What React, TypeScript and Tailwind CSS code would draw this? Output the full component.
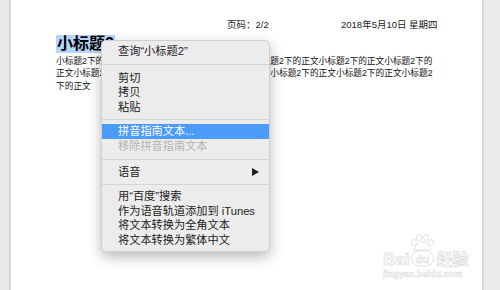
import React from "react";

const FONT = { fontFamily: '"Liberation Sans","Noto Sans CJK SC",sans-serif' };

const unit = "小标题2下的正文";
const line1 = unit.repeat(5) + "小标题2下的";
const line2 = "正文" + unit.repeat(5) + "小标题2";
const line3 = "下的正文";

function Item({ children, disabled, active, arrow }: { children: React.ReactNode; disabled?: boolean; active?: boolean; arrow?: boolean }) {
  return (
    <div
      className={
        "flex h-[14.5px] items-center justify-between pl-[16px] pr-[10px] text-[11.2px] leading-[14.5px] whitespace-nowrap " +
        (active ? "bg-[#4b9bf8] text-white" : disabled ? "text-[#b2b2b2]" : "text-[#222222]")
      }
    >
      <span>{children}</span>
      {arrow && (
        <svg width="7" height="8" viewBox="0 0 7 8">
          <path d="M0 0 L7 4 L0 8 Z" fill="#1e1e1e" />
        </svg>
      )}
    </div>
  );
}

function Sep({ h }: { h: string }) {
  return (
    <div className={"flex items-center " + h}>
      <div className="h-px w-full bg-[#d5d5d5]" />
    </div>
  );
}

export default function App() {
  return (
    <div className="flex h-[290px] w-[500px] overflow-hidden bg-[#ebebeb]" style={FONT}>
      <div className="w-[9px] bg-[#e9e9e9]" />
      <div className="w-px bg-[#cdcdcd]" />
      <div className="w-px bg-[#e2e2e2]" />
      <div className="relative w-[471px] bg-white">
        <div className="flex flex-col pl-[45px] pt-[19px]">
          <div className="flex pl-[171px] text-[9.5px] leading-[12px] text-[#1a1a1a] whitespace-nowrap">
            <span className="w-[114px]">页码：2/2</span>
            <span>2018年5月10日 星期四</span>
          </div>
          <div className="mt-[4px] flex">
            <span className="inline-block h-[18px] bg-[#b4d5fe] px-px text-[16px] font-bold leading-[18px] text-black">
              小标题2
            </span>
          </div>
          <div className="mt-[1.5px] flex flex-col text-[8.7px] leading-[12.6px] text-[#111] whitespace-nowrap">
            <span>{line1}</span>
            <span>{line2}</span>
            <span>{line3}</span>
          </div>
        </div>

        {/* watermark */}
        <div className="absolute left-[372px] top-[234px] flex flex-col items-start">
          <div className="flex items-end">
            <span className="text-[17px] font-bold leading-[15px] text-white [-webkit-text-stroke:0.7px_#d9d9d9]">Bai</span>
            <div className="relative mx-[1px] h-[33px] w-[25px]">
              <svg width="25" height="33" viewBox="0 0 25 33" className="absolute left-0 top-0">
                <g fill="white" stroke="#d9d9d9" strokeWidth="0.8">
                  <ellipse cx="9" cy="3.5" rx="2.6" ry="3" />
                  <ellipse cx="16" cy="3.5" rx="2.6" ry="3" />
                  <ellipse cx="4" cy="8.5" rx="2.5" ry="3" />
                  <ellipse cx="21" cy="8.5" rx="2.5" ry="3" />
                  <path d="M12.5 8 C8 8 5 13 4 16 L21 16 C20 13 17 8 12.5 8 Z" />
                  <rect x="1.5" y="17" width="22" height="15" rx="7.5" />
                </g>
                <text x="12.5" y="28.5" textAnchor="middle" fontSize="11" fontWeight="bold" fill="white" stroke="#d9d9d9" strokeWidth="0.6" fontFamily="Liberation Sans, sans-serif">du</text>
              </svg>
            </div>
            <span className="text-[16px] font-bold leading-[15px] text-white [-webkit-text-stroke:0.7px_#d9d9d9]">经验</span>
          </div>
          <span className="mt-[3px] text-[9px] font-bold leading-[9px] text-white [-webkit-text-stroke:0.5px_#dadada]">jingyan.baidu.com</span>
        </div>

        {/* context menu */}
        <div className="absolute left-[90px] top-[40px] w-[169px] rounded-[5px] border border-[rgba(0,0,0,0.12)] bg-[#ececec] pb-[4px] pt-[3px] shadow-[0_5px_14px_rgba(0,0,0,0.28)]">
          <Item>查询“小标题2”</Item>
          <Sep h="h-[12px]" />
          <Item>剪切</Item>
          <Item>拷贝</Item>
          <Item>粘贴</Item>
          <Sep h="h-[10px]" />
          <Item active>拼音指南文本...</Item>
          <Item disabled>移除拼音指南文本</Item>
          <Sep h="h-[12px]" />
          <Item arrow>语音</Item>
          <Sep h="h-[9.5px]" />
          <Item>用“百度”搜索</Item>
          <Item>作为语音轨道添加到 iTunes</Item>
          <Item>将文本转换为全角文本</Item>
          <Item>将文本转换为繁体中文</Item>
        </div>
      </div>
      <div className="w-px bg-[#d0d0d0]" />
      <div className="w-px bg-[#dddddd]" />
      <div className="flex-1 bg-[#ebebeb]" />
    </div>
  );
}
